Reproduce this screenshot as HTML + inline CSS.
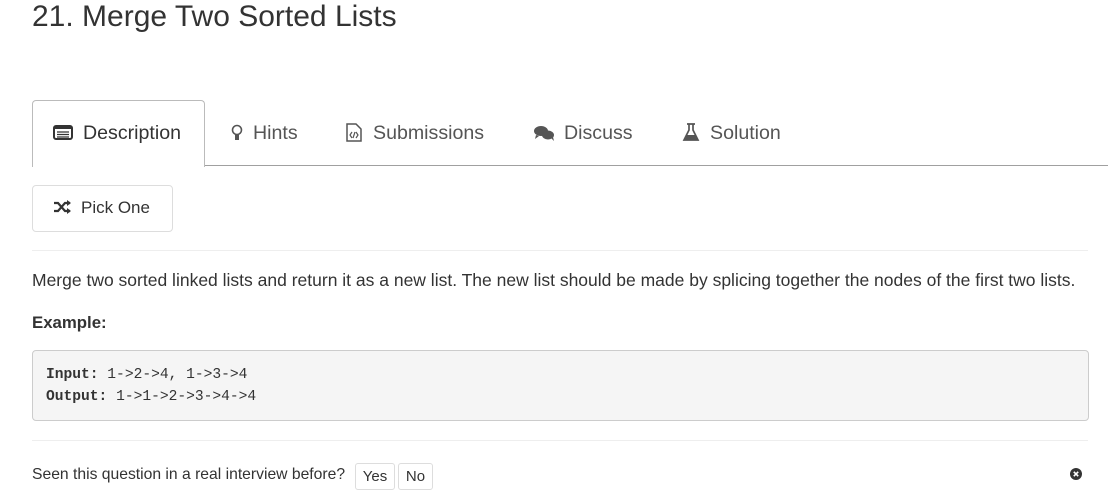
<!DOCTYPE html>
<html><head><style>
body{margin:0;background:#fff;font-family:"Liberation Sans",sans-serif;color:#333;width:1108px;height:499px;overflow:hidden;position:relative}
.a{position:absolute}
h1{position:absolute;left:32px;top:0;margin:0;font-size:30px;font-weight:400;color:#333;line-height:34px}
.tabline{left:32px;top:165px;width:1076px;height:1px;background:#a0a0a0}
.tab{top:100px;left:32px;width:171px;height:66px;border:1px solid #bbb;border-bottom:none;border-radius:4px 4px 0 0;background:#fff}
.t{top:121px;font-size:19.6px;color:#555;line-height:24px}
.btn{left:32px;top:185px;width:139px;height:45px;border:1px solid #ddd;border-radius:4px}
.hr{left:32px;width:1056px;height:1px;background:#eee}
pre{position:absolute;left:32px;top:350px;width:1057px;height:71px;margin:0;box-sizing:border-box;border:1px solid #ccc;border-radius:4px;background:#f5f5f5;font-family:"Liberation Mono",monospace;font-size:14.6px;line-height:22px;padding:13px 13px;color:#333}
.sb{top:463px;height:25px;border:1px solid #ddd;border-radius:3px;font-size:15px;line-height:25px;text-align:center}
</style></head><body>
<h1>21. Merge Two Sorted Lists</h1>
<div class="a tabline"></div>
<div class="a tab"></div>
<svg class="a" style="left:53px;top:125px" width="20" height="15"><rect x="1" y="1" width="18" height="13" rx="2" fill="none" stroke="#333" stroke-width="2"/><rect x="1" y="1" width="18" height="3" fill="#333"/><path d="M4 7h12M4 9.5h12M4 12h12" stroke="#333" stroke-width="1.3"/></svg>
<div class="a t" style="left:83px;color:#333">Description</div>
<svg class="a" style="left:231px;top:124px" width="12" height="18"><circle cx="6" cy="6" r="4.5" fill="none" stroke="#555" stroke-width="1.6"/><rect x="4" y="11" width="4" height="5" fill="#555"/></svg>
<div class="a t" style="left:253px">Hints</div>
<svg class="a" style="left:345px;top:123px" width="18" height="19"><path d="M2 1h9l5 5v12H2z" fill="none" stroke="#555" stroke-width="1.5"/><path d="M7 9l-2 3 2 3M11 9l2 3-2 3M10 9l-2 6" stroke="#555" fill="none" stroke-width="1.2"/></svg>
<div class="a t" style="left:373px">Submissions</div>
<svg class="a" style="left:533px;top:124px" width="22" height="18"><ellipse cx="8" cy="7" rx="7" ry="5" fill="#555"/><ellipse cx="15" cy="11" rx="6" ry="4.5" fill="#555"/><path d="M3 11l-1 4 4-3zM18 14l3 3-1-4z" fill="#555"/></svg>
<div class="a t" style="left:564px">Discuss</div>
<svg class="a" style="left:682px;top:123px" width="18" height="18"><path d="M5 1h8M7 1v6L2 17h14L11 7V1" fill="none" stroke="#555" stroke-width="1.7"/><path d="M4.5 12h9l2.5 5H2z" fill="#555"/></svg>
<div class="a t" style="left:710px">Solution</div>
<div class="a btn"></div>
<svg class="a" style="left:53px;top:200px" width="19" height="14"><path d="M1 3h4l7 8h5M1 11h4l7-8h5" fill="none" stroke="#333" stroke-width="2.2"/><path d="M14 0l4 3-4 3zM14 8l4 3-4 3z" fill="#333"/></svg>
<div class="a" style="left:81px;top:198px;font-size:17px">Pick One</div>
<div class="a hr" style="top:250px"></div>
<div class="a" style="left:32px;top:270px;font-size:17.5px;color:#333">Merge two sorted linked lists and return it as a new list. The new list should be made by splicing together the nodes of the first two lists.</div>
<div class="a" style="left:32px;top:313px;font-size:16.8px;font-weight:700">Example:</div>
<pre><b>Input:</b> 1-&gt;2-&gt;4, 1-&gt;3-&gt;4
<b>Output:</b> 1-&gt;1-&gt;2-&gt;3-&gt;4-&gt;4</pre>
<div class="a hr" style="top:440px"></div>
<div class="a" style="left:32px;top:466px;font-size:15.7px">Seen this question in a real interview before?</div>
<div class="a sb" style="left:355px;width:38px">Yes</div>
<div class="a sb" style="left:398px;width:33px">No</div>
<svg class="a" style="left:1070px;top:468px" width="12" height="12"><circle cx="6" cy="6" r="6" fill="#333"/><path d="M3.8 3.8l4.4 4.4M8.2 3.8l-4.4 4.4" stroke="#fff" stroke-width="1.6"/></svg>
</body></html>
